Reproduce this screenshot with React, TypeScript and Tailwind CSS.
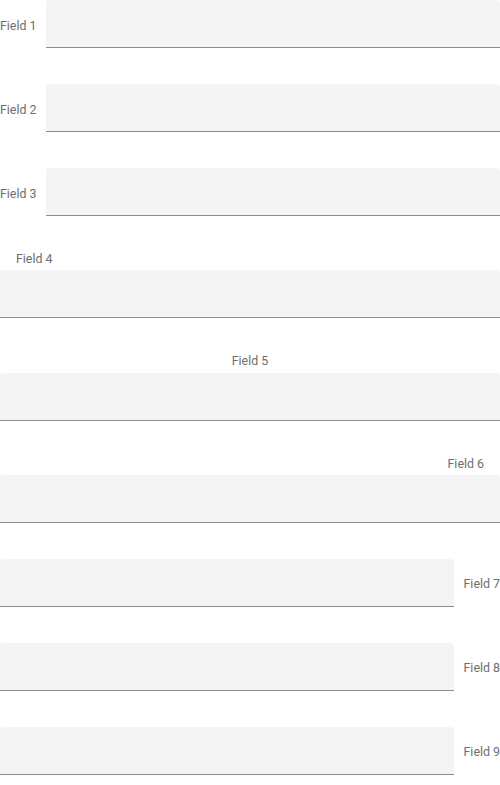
const fields = [
  { label: "Field 1", pos: "left" },
  { label: "Field 2", pos: "left" },
  { label: "Field 3", pos: "left" },
  { label: "Field 4", pos: "top-left" },
  { label: "Field 5", pos: "top-center" },
  { label: "Field 6", pos: "top-right" },
  { label: "Field 7", pos: "right" },
  { label: "Field 8", pos: "right" },
  { label: "Field 9", pos: "right" },
];

function Input() {
  return (
    <input
      className="h-12 w-full min-w-0 rounded-t bg-[#f4f4f4] border-b border-[#8c8c8c] px-4 outline-none"
      type="text"
    />
  );
}

function Label({ text, className = "" }: { text: string; className?: string }) {
  return (
    <span className={`block text-[12.4px] leading-[14px] text-[#6e6e6e] whitespace-nowrap ${className}`}>
      {text}
    </span>
  );
}

export default function App() {
  return (
    <div className="w-[500px] flex flex-col gap-9 bg-white" style={{ fontFamily: "Roboto, sans-serif" }}>
      {fields.map((f) => {
        if (f.pos === "left") {
          return (
            <div key={f.label} className="flex items-center gap-2.5">
              <Label text={f.label} className="pt-[3px]" />
              <Input />
            </div>
          );
        }
        if (f.pos === "right") {
          return (
            <div key={f.label} className="flex items-center gap-2.5">
              <Input />
              <Label text={f.label} className="pt-[3px]" />
            </div>
          );
        }
        const align =
          f.pos === "top-left" ? "text-left pl-4" : f.pos === "top-center" ? "text-center" : "text-right pr-4";
        return (
          <div key={f.label} className="flex flex-col">
            <div className={`h-[18.33px] ${align}`}>
              <Label text={f.label} />
            </div>
            <Input />
          </div>
        );
      })}
    </div>
  );
}
